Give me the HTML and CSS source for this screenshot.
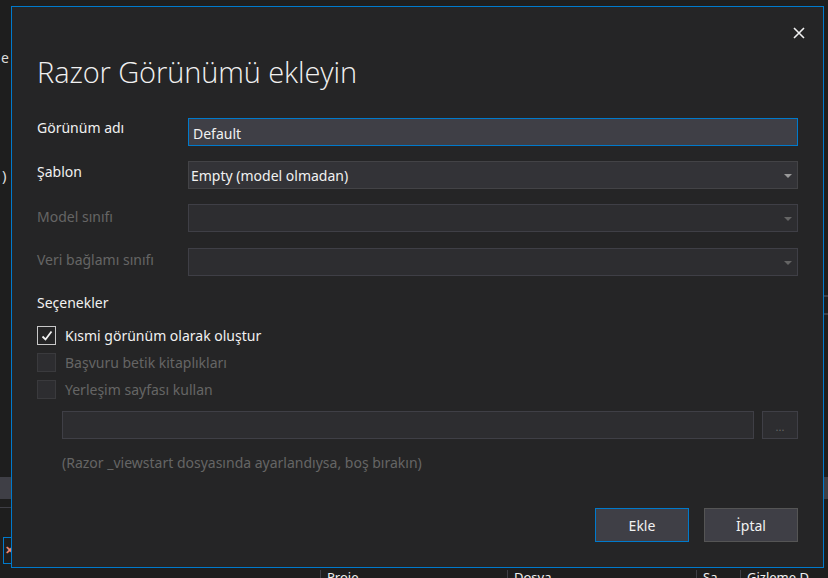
FILE: index.html
```html
<!DOCTYPE html>
<html lang="tr">
<head>
<meta charset="utf-8">
<title>Razor Görünümü ekleyin</title>
<link rel="stylesheet" href="styles.css">
</head>
<body>
<div class="backdrop">
  <span class="bg-e">e</span>
  <span class="bg-paren">)</span>
  <div class="bg-tabbar"></div>
  <div class="bg-line"></div>
  <div class="bg-err"><span>✕</span></div>
  <div class="bg-headers">
    <span class="h1">Proje</span>
    <span class="h2">Dosya</span>
    <span class="h3">Sa</span>
    <span class="h4">Gizleme D</span>
  </div>
  <div class="bg-right-a"></div>
  <div class="bg-right-b"></div>
  <div class="bg-right-c"></div>
</div>

<div class="dialog">
  <button class="close" aria-label="Kapat">
    <svg width="12" height="12" viewBox="0 0 12 12"><path d="M1 1L11 11M11 1L1 11" stroke="#f1f1f1" stroke-width="1.6"/></svg>
  </button>
  <h1 class="title">Razor Görünümü ekleyin</h1>

  <div class="form">
    <label class="label">Görünüm adı</label>
    <div class="field text focused">Default</div>

    <label class="label">Şablon</label>
    <div class="field combo">Empty (model olmadan)<span class="arrow"></span></div>

    <label class="label disabled">Model sınıfı</label>
    <div class="field combo off"><span class="arrow"></span></div>

    <label class="label disabled">Veri bağlamı sınıfı</label>
    <div class="field combo off"><span class="arrow"></span></div>
  </div>

  <div class="section">Seçenekler</div>
  <div class="checks">
    <div class="check">
      <span class="box checked"><svg width="14" height="14" viewBox="0 0 14 14"><path d="M2.5 7.5L5.5 10.5L11.5 2.5" fill="none" stroke="#f1f1f1" stroke-width="1.8"/></svg></span>
      <span class="ctext">Kısmi görünüm olarak oluştur</span>
    </div>
    <div class="check off">
      <span class="box"></span>
      <span class="ctext">Başvuru betik kitaplıkları</span>
    </div>
    <div class="check off">
      <span class="box"></span>
      <span class="ctext">Yerleşim sayfası kullan</span>
    </div>
  </div>

  <div class="layout-row">
    <div class="field path"></div>
    <div class="browse">...</div>
  </div>
  <div class="hint">(Razor _viewstart dosyasında ayarlandıysa, boş bırakın)</div>

  <div class="buttons">
    <button class="btn primary">Ekle</button>
    <button class="btn">İptal</button>
  </div>
</div>
</body>
</html>
```

FILE: styles.css
```css
* { box-sizing: border-box; }
html, body {
  margin: 0;
  width: 828px;
  height: 578px;
  overflow: hidden;
  background: #1e1e1e;
  font-family: "Noto Sans", "Open Sans", sans-serif;
}
.backdrop { position: absolute; inset: 0; }
.backdrop span, .backdrop div { position: absolute; }
.bg-e { left: 1px; top: 48px; color: #dcdcdc; font-size: 14px; }
.bg-paren { left: 2px; top: 165px; color: #dcdcdc; font-size: 15px; }
.bg-tabbar { left: 0; top: 477px; width: 11px; height: 22px; background: #3f3f46; }
.bg-line { left: 0; top: 507px; width: 11px; height: 1px; background: #3f3f46; }
.bg-err { left: 3px; top: 537px; width: 9px; height: 27px; border: 1px solid #007acc; border-right: none; }
.bg-err span { left: 1px; top: 4px; color: #f48771; font-size: 11px; font-weight: bold; }
.bg-headers { left: 0; top: 568px; width: 828px; height: 10px; }
.bg-headers span { top: 2px; color: #f1f1f1; font-size: 13px; padding-left: 6px; border-left: 1px solid #3f3f46; height: 12px; line-height: 14px; }
.h1 { left: 320px; }
.h2 { left: 507px; }
.h3 { left: 696px; }
.h4 { left: 740px; }
.bg-right-a { left: 824px; top: 295px; width: 4px; height: 2px; background: #3f3f46; }
.bg-right-b { left: 824px; top: 313px; width: 4px; height: 2px; background: #3f3f46; }
.bg-right-c { left: 824px; top: 477px; width: 4px; height: 22px; background: #3f3f46; }

.dialog {
  position: absolute;
  left: 11px;
  top: 6px;
  width: 813px;
  height: 562px;
  border: 1px solid #007acc;
  background: #252526;
  color: #f1f1f1;
  padding: 0 25px 0 25px;
  font-size: 14px;
}
.close {
  position: absolute;
  right: 17px;
  top: 19px;
  width: 14px;
  height: 14px;
  padding: 0;
  border: none;
  background: none;
  display: flex;
  align-items: center;
  justify-content: center;
}
.title {
  margin: 45px 0 0 0;
  font-weight: 300;
  font-family: "Open Sans", "Noto Sans", sans-serif;
  font-size: 29px;
  line-height: 40px;
  letter-spacing: -0.1px;
  color: #f1f1f1;
}
.form {
  margin-top: 26px;
  display: grid;
  grid-template-columns: 151px 1fr;
  row-gap: 15px;
  align-items: start;
}
.label { line-height: 20px; margin-top: 0; color: #f1f1f1; }
.label.disabled { color: #656565; margin-top: 3px; }
.form .label:nth-child(3) { margin-top: 1px; }
.field {
  height: 28px;
  border: 1px solid #434346;
  background: #333337;
  line-height: 28px;
  padding-left: 2px;
  color: #f1f1f1;
  position: relative;
}
.field.text { background: #3f3f46; border-color: #007acc; padding-left: 4px; line-height: 29px; }
.field.off { background: #2d2d30; border-color: #3f3f46; }
.form .field:nth-child(8) { margin-top: 1px; }
.arrow {
  position: absolute;
  right: 5px;
  top: 12px;
  width: 0; height: 0;
  border-left: 4px solid transparent;
  border-right: 4px solid transparent;
  border-top: 4px solid #999999;
}
.off .arrow { border-top-color: #656565; }

.section { margin-top: 17px; line-height: 20px; }
.checks { margin-top: 13px; display: flex; flex-direction: column; gap: 8px; }
.check { display: flex; align-items: center; gap: 9px; height: 19px; }
.box {
  width: 19px; height: 19px;
  border: 1px solid #2d2d30;
  background: #2d2d30;
  display: flex; align-items: center; justify-content: center;
}
.box.checked { border-color: #c8c8c8; background: #252526; }
.check.off .box { border-color: #3a3a3d; background: #2d2d30; }
.check.off .ctext { color: #656565; }

.layout-row { margin: 12px 0 0 25px; display: flex; gap: 8px; }
.field.path { flex: 1; background: #2d2d30; border-color: #3f3f46; }
.browse {
  width: 36px; height: 28px;
  border: 1px solid #3f3f46;
  background: #2d2d30;
  color: #656565;
  font-size: 11px;
  text-align: center;
  line-height: 30px;
}
.hint { margin: 14px 0 0 25px; color: #656565; line-height: 20px; }

.buttons {
  position: absolute;
  right: 25px;
  bottom: 25px;
  display: flex;
  gap: 15px;
}
.btn {
  width: 94px; height: 34px;
  background: #3f3f46;
  border: 1px solid #555555;
  color: #f1f1f1;
  font-family: "Noto Sans", "Open Sans", sans-serif;
  font-size: 14px;
  padding: 0;
}
.btn.primary { border-color: #007acc; }
```
